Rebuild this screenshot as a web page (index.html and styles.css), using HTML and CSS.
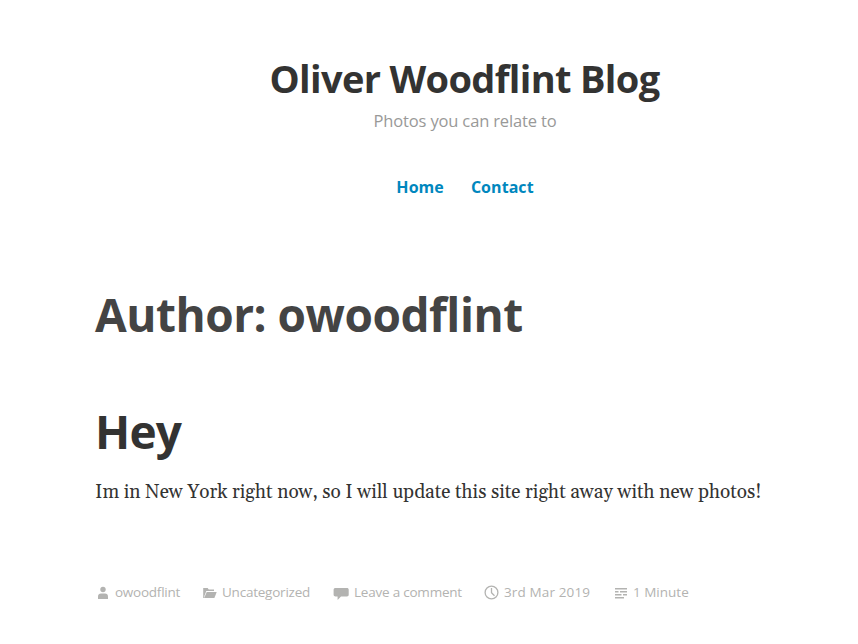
FILE: index.html
```html
<!DOCTYPE html>
<html lang="en">
<head>
<meta charset="utf-8">
<title>Oliver Woodflint Blog</title>
<link rel="stylesheet" href="styles.css">
</head>
<body>
<div class="site">
  <header class="site-header">
    <h1 class="site-title"><a href="#">Oliver Woodflint Blog</a></h1>
    <p class="tagline">Photos you can relate to</p>
    <nav class="nav"><a class="home" href="#">Home</a><a class="contact" href="#">Contact</a></nav>
  </header>
  <main>
    <h2 class="page-title">Author: owoodflint</h2>
    <article>
      <h2 class="entry-title"><a href="#">Hey</a></h2>
      <p class="entry-text">Im in New York right now, so I will update this site right away with new photos!</p>
      <footer class="meta">
        <span class="item author"><svg viewBox="0 0 16 16"><circle cx="8" cy="5.500" r="2.700"/><path d="M3 15v-2.500C3 10.600 4.200 9.500 6 9.500h4c1.800 0 3 1.100 3 3V15z"/></svg><a href="#">owoodflint</a></span>
        <span class="item category"><svg viewBox="0 0 16 16"><path d="M1.200 4h4.500l1 1.500H12v1.500H4.300L2.400 12V14H1.200z"/><path d="M4.700 8h10L12.400 14H2.200z"/></svg><a href="#">Uncategorized</a></span>
        <span class="item comments"><svg viewBox="0 0 16 16"><path d="M2.500 4h11.500c1 0 1.700.7 1.700 1.700v5c0 1-.7 1.700-1.700 1.700H8L4.600 16v-3.600H2.500C1.500 12.400.6 11.700.6 10.700v-5C.6 4.700 1.500 4 2.500 4z"/></svg><a href="#">Leave a comment</a></span>
        <span class="item date"><svg viewBox="0 0 16 16"><circle class="line" cx="7.500" cy="8.500" r="6.400"/><path class="line" d="M7.500 4V8.700l3 3"/></svg><a href="#">3rd Mar 2019</a></span>
        <span class="item reading"><svg viewBox="0 0 16 16"><path d="M2 4h12v1.400H2zM2 7h3.500v1.400H2zM7 7h7v1.400H7zM2 10h6.500v1.400H2zM10 10h4v1.400h-4zM2 13h9v1.400H2z"/></svg><span class="label">1 Minute</span></span>
      </footer>
    </article>
  </main>
</div>
</body>
</html>
```
FILE: styles.css
```css
* { box-sizing: border-box; }
body { margin: 0; background: #fff; color: #333332; font-family: "Open Sans", "Noto Sans", sans-serif; }
h1, h2, p { margin: 0; }
a { color: inherit; text-decoration: none; }
.site { width: 740px; margin-left: 95px; padding-top: 53px; white-space: nowrap; }
.site-header { text-align: center; }
.site-title { font-size: 38px; line-height: 50px; font-weight: 700; letter-spacing: -0.66px; margin-right: 1px; }
.tagline { margin-top: 5px; font-size: 16.5px; line-height: 26px; color: #999998; letter-spacing: -0.15px; }
.nav { display: flex; justify-content: center; gap: 27px; margin-top: 40px; font-size: 16px; line-height: 26px; font-weight: 700; color: #0087be; letter-spacing: 0.05px; }
.page-title, .entry-title { font-size: 46px; line-height: 60px; font-weight: 700; }
.page-title { margin-top: 84px; color: #444; letter-spacing: -0.5px; }
.entry-title { margin-top: 57px; letter-spacing: -0.8px; }
.entry-text { margin-top: 16px; font-family: Georgia, Gelasio, "Liberation Serif", serif; font-size: 19px; line-height: 30px; }
.meta { display: flex; margin-top: 75px; font-size: 13.5px; line-height: 20px; color: #b3b3b1; }
.item { display: flex; align-items: center; }
.item svg { width: 16px; height: 16px; margin-right: 4px; fill: currentColor; }
.item .line { fill: none; stroke: currentColor; stroke-width: 1.3; }
.author { width: 107px; letter-spacing: -0.25px; }
.category { width: 131px; letter-spacing: -0.23px; }
.comments { width: 151px; letter-spacing: -0.22px; }
.comments svg { margin-right: 5px; }
.date { width: 129px; letter-spacing: 0.13px; }
```
